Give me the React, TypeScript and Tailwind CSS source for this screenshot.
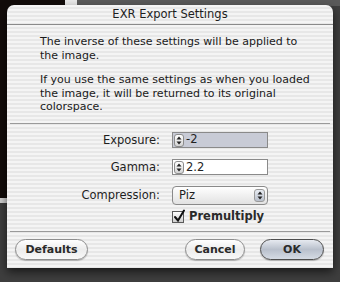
import React from "react";

const font = "font-['DejaVu_Sans',sans-serif]";
const stripes =
  "bg-[repeating-linear-gradient(180deg,#f4f4f4_0px,#f4f4f4_2px,#e7e7e7_2px,#e7e7e7_4px)]";

function Arrows() {
  return (
    <svg width="6" height="9" viewBox="0 0 6 9">
      <path d="M3 0.5 L5.5 3.5 H0.5 Z" fill="#222" />
      <path d="M3 8.5 L5.5 5.5 H0.5 Z" fill="#222" />
    </svg>
  );
}

function NumberField({ value, selected }: { value: string; selected?: boolean }) {
  return (
    <div
      className={`flex h-[16px] w-[96px] items-center gap-[2px] border border-[#8a8a8a] pl-[1px] ${
        selected ? "bg-[#c8cbd6]" : "bg-white"
      }`}
    >
      <span className="flex h-[13px] w-[10px] shrink-0 items-center justify-center rounded-[3px] border border-[#8c8c8c] bg-gradient-to-b from-[#ffffff] to-[#d4d4d4]">
        <Arrows />
      </span>
      <span className="text-[11.5px] leading-none text-[#222]">{value}</span>
    </div>
  );
}

function Button({ label, primary, width }: { label: string; primary?: boolean; width: string }) {
  return (
    <div
      className={`flex h-[21px] items-center justify-center rounded-full border text-[11px] font-bold text-[#2a2a2a] shadow-[0_1px_1px_rgba(0,0,0,0.25)] ${width} ${
        primary
          ? "border-[#4e4e4e] bg-gradient-to-b from-[#e6eaf0] via-[#b9c0cc] to-[#d5dbe4]"
          : "border-[#8e8e8e] bg-gradient-to-b from-[#ffffff] via-[#ececec] to-[#f8f8f8]"
      }`}
    >
      {label}
    </div>
  );
}

export default function App() {
  return (
    <div className={`relative h-[282px] w-[340px] overflow-hidden bg-[#3e3e3e] ${font}`}>
      {/* desktop behind the sheet */}
      <div className="absolute left-0 top-0 h-[6px] w-[340px] bg-[#5a5a5a]" />
      <div className="absolute left-0 top-0 h-[198px] w-[65px] bg-[#120c0a]" />
      <div className="absolute left-[65px] top-0 h-[6px] w-[12px] bg-[#e8e8e8]" />
      <div className="absolute left-0 top-[198px] h-[5px] w-[8px] bg-[#cfcfcf]" />

      <div
        className={`absolute left-[7px] top-[5px] h-[263px] w-[326px] overflow-hidden rounded-t-[7px] shadow-[0_4px_10px_rgba(0,0,0,0.6)] ${stripes}`}
      >
        <div className="flex h-[20px] items-center justify-center border-b border-[#8a8a8a] text-[11.5px] text-[#1e1e1e]">
          EXR Export Settings
        </div>

        <div className="w-[306px] pl-[33px] pt-[10px] text-[11px] leading-[13.5px] text-[#1a1a1a]">
          <p>The inverse of these settings will be applied to the image.</p>
          <p className="mt-[11px]">
            If you use the same settings as when you loaded the image, it will be returned to its original colorspace.
          </p>
        </div>

        <div className="mx-[3px] mt-[9px] border-t border-[#9a9a9a]" />

        <div className="mt-[8px] grid grid-cols-[153px_auto] items-center gap-x-[12px] gap-y-[10px] text-[11.5px] text-[#1e1e1e]">
          <span className="text-right">Exposure:</span>
          <NumberField value="-2" selected />
          <span className="text-right">Gamma:</span>
          <NumberField value="2.2" />
          <span className="text-right">Compression:</span>
          <div className="flex h-[19px] w-[96px] items-center justify-between rounded-[4px] border border-[#8a8a8a] bg-gradient-to-b from-[#ffffff] via-[#f0f0f0] to-[#e2e2e2] pl-[6px] pr-[2px]">
            <span className="text-[11.5px] leading-none">Piz</span>
            <span className="flex h-[13px] w-[11px] items-center justify-center rounded-[3px] border border-[#9a9a9a] bg-gradient-to-b from-[#e8ecf2] to-[#b9c0cc]">
              <Arrows />
            </span>
          </div>
          <span />
          <div className="-mt-[7px] flex items-center gap-[5px]">
            <span className="relative h-[12px] w-[12px] border border-[#5a5a5a] bg-gradient-to-b from-[#ffffff] to-[#cfcfcf]">
              <svg className="absolute -top-[3px] left-[0px]" width="13" height="14" viewBox="0 0 13 14">
                <path d="M2 8 L5 11.5 L11 1.5" fill="none" stroke="#111" strokeWidth="2" strokeLinecap="round" />
              </svg>
            </span>
            <span className="text-[11.5px] font-semibold text-[#2a2a2a]">Premultiply</span>
          </div>
        </div>

        <div className="mx-[3px] mt-[6px] border-t border-[#9a9a9a]" />

        <div className="mt-[7px] flex items-center pl-[8px] pr-[9px]">
          <Button label="Defaults" width="w-[73px]" />
          <div className="flex-1" />
          <Button label="Cancel" width="w-[60px]" />
          <div className="w-[15px]" />
          <Button label="OK" width="w-[64px]" primary />
        </div>
      </div>
    </div>
  );
}
